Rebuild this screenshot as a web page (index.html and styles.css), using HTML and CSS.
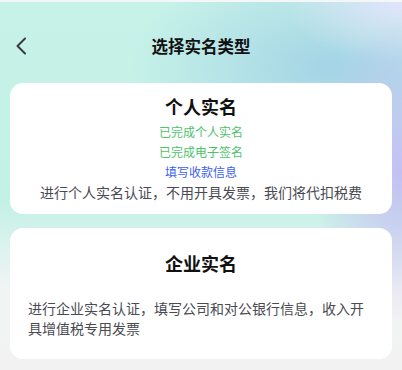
FILE: index.html
```html
<!DOCTYPE html>
<html lang="zh">
<head>
<meta charset="utf-8">
<link rel="stylesheet" href="styles.css">
</head>
<body>
<div class="page">
  <div class="header">
    <span class="back">
      <svg width="14" height="18" viewBox="0 0 14 18"><path d="M11 1.5 L3.5 9 L11 16.5" fill="none" stroke="#3a3a44" stroke-width="2" stroke-linecap="round" stroke-linejoin="round"/></svg>
    </span>
    <h1 class="title">选择实名类型</h1>
  </div>
  <div class="card card-personal">
    <div class="card-title">个人实名</div>
    <div class="status done">已完成个人实名</div>
    <div class="status done">已完成电子签名</div>
    <div class="status link">填写收款信息</div>
    <div class="desc center">进行个人实名认证，不用开具发票，我们将代扣税费</div>
  </div>
  <div class="card card-company">
    <div class="card-title">企业实名</div>
    <div class="desc">进行企业实名认证，填写公司和对公银行信息，收入开具增值税专用发票</div>
  </div>
</div>
</body>
</html>
```
FILE: styles.css
```css
* { box-sizing: border-box; margin: 0; padding: 0; }
html, body { width: 402px; height: 370px; overflow: hidden; }
body {
  font-family: "Noto Sans CJK SC", "Noto Sans", sans-serif;
  background: #f2f2f2;
}
.page {
  height: 370px;
  padding: 0 10px;
  border-top: 2px solid #f4f7f8;
  background:
    radial-gradient(ellipse 90px 150px at 402px 170px, rgba(196,182,245,0.85), rgba(196,182,245,0) 100%),
    radial-gradient(ellipse 120px 60px at 402px 0px, rgba(225,228,250,1), rgba(225,228,250,0) 100%),
    radial-gradient(ellipse 200px 110px at 330px 65px, rgba(164,212,230,1), rgba(164,212,230,0.4) 60%, rgba(164,212,230,0) 100%),
    linear-gradient(180deg, #c6f2e8 0%, #c4f1e6 55%, #f2f4f4 78%, #f2f2f2 100%);
}
.header {
  position: relative;
  height: 81px;
  display: flex;
  align-items: flex-start;
  justify-content: center;
  padding-top: 32px;
}
.back {
  position: absolute;
  left: 4px;
  top: 35px;
  width: 14px;
  height: 18px;
  display: block;
}
.back svg { display: block; }
.title {
  font-size: 16.5px;
  font-weight: 700;
  color: #111;
  line-height: 24px;
}
.card {
  background: #fff;
  border-radius: 13px;
  padding: 0 18px;
}
.card-personal {
  padding-top: 11px;
  padding-bottom: 12px;
  text-align: center;
}
.card-company {
  margin-top: 14px;
  padding-top: 23px;
  padding-bottom: 21px;
}
.card-title {
  font-size: 18px;
  font-weight: 700;
  color: #111;
  line-height: 24px;
  text-align: center;
}
.card-personal .card-title { margin-bottom: 4px; }
.card-company .card-title { margin-bottom: 23px; }
.status {
  font-size: 12px;
  line-height: 20px;
}
.done { color: #4dc36a; }
.link { color: #3c5ef0; }
.desc {
  font-size: 14px;
  line-height: 20px;
  color: #4a4a52;
}
.desc.center { text-align: center; white-space: nowrap; }
```
